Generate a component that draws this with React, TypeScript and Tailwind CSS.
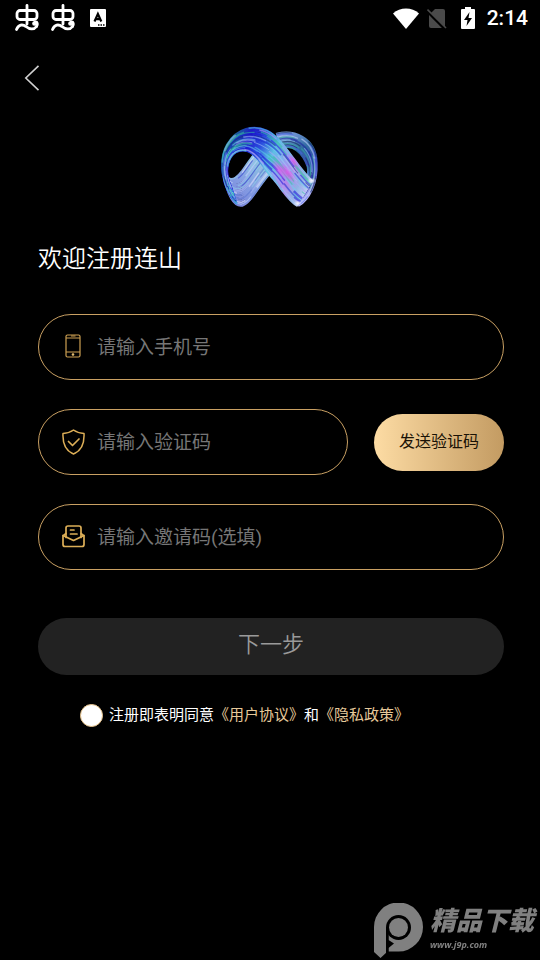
import React from "react";

type Pt = [number, number];

interface RibbonProps {
  outer: Pt[];
  inner: Pt[];
  count: number;
  base: string;
  palette: string[];
  seed: number;
}

// Small deterministic noise so the strands are the same on each render
function noise(n: number) {
  const v = Math.sin(n * 127.1) * 43758.5453;
  return v - Math.floor(v);
}

function curve(points: Pt[]) {
  const p = points.map(([x, y]) => `${x.toFixed(1)} ${y.toFixed(1)}`);
  let d = `M${p[0]}`;
  for (let i = 1; i < p.length; i += 3) {
    d += `C${p[i]} ${p[i + 1]} ${p[i + 2]}`;
  }
  return d;
}

function Ribbon({ outer, inner, count, base, palette, seed }: RibbonProps) {
  const strands = Array.from({ length: count }, (_, i) => {
    const t = i / (count - 1);
    return curve(
      outer.map(([x, y], k): Pt => [
        x + (inner[k][0] - x) * t,
        y + (inner[k][1] - y) * t,
      ])
    );
  });

  return (
    <g fill="none">
      {strands.map((d, i) => (
        <path key={`b${i}`} d={d} stroke={base} strokeWidth="6" />
      ))}
      {strands.map((d, i) => {
        const n = seed + i;
        return (
          <path
            key={`s${i}`}
            d={d}
            stroke={palette[Math.floor(noise(n) * palette.length)]}
            strokeWidth={3 + noise(n + 40) * 2}
            strokeOpacity={0.55}
            strokeDasharray={`${50 + noise(n + 7) * 70} ${30 + noise(n + 13) * 60}`}
            strokeDashoffset={noise(n + 21) * 120}
          />
        );
      })}
    </g>
  );
}

function BrandLogo() {
  return (
    <svg
      viewBox="0 0 330 285"
      className="w-[110px] h-[95px]"
      role="img"
      aria-label="连山"
    >
      <defs>
        <linearGradient id="front" gradientUnits="userSpaceOnUse" x1="20" y1="90" x2="285" y2="235">
          <stop offset="0" stopColor="#1c7a8a" />
          <stop offset="0.17" stopColor="#1c18c8" />
          <stop offset="0.32" stopColor="#2b4fe0" />
          <stop offset="0.46" stopColor="#5fc0e6" />
          <stop offset="0.62" stopColor="#9a9cf0" />
          <stop offset="0.72" stopColor="#b884ea" />
          <stop offset="0.84" stopColor="#8fb4e6" />
          <stop offset="1" stopColor="#dcdcff" />
        </linearGradient>
        <linearGradient id="left" gradientUnits="userSpaceOnUse" x1="45" y1="245" x2="150" y2="120">
          <stop offset="0" stopColor="#7a84dc" />
          <stop offset="0.5" stopColor="#86a2e4" />
          <stop offset="1" stopColor="#8fcbe0" />
        </linearGradient>
        <linearGradient id="right" gradientUnits="userSpaceOnUse" x1="200" y1="40" x2="280" y2="240">
          <stop offset="0" stopColor="#7f9fe0" />
          <stop offset="0.3" stopColor="#2f6aa0" />
          <stop offset="0.55" stopColor="#3c4cb8" />
          <stop offset="1" stopColor="#b8b9f8" />
        </linearGradient>
        <radialGradient id="glow">
          <stop offset="0" stopColor="#f24bf0" stopOpacity="0.8" />
          <stop offset="1" stopColor="#f24bf0" stopOpacity="0" />
        </radialGradient>
        <radialGradient id="shine">
          <stop offset="0" stopColor="white" stopOpacity="0.85" />
          <stop offset="1" stopColor="white" stopOpacity="0" />
        </radialGradient>
      </defs>
      <Ribbon
        outer={[[183, 42], [235, 28], [302, 50], [305, 128], [308, 190], [282, 240], [250, 258]]}
        inner={[[200, 86], [230, 70], [262, 96], [278, 140], [284, 170], [268, 205], [245, 235]]}
        count={14}
        base="url(#right)"
        palette={["#8fc7f0", "#1a1f9c", "#35b59a", "#c6d6ff", "#0d2554", "#4a63e8"]}
        seed={3}
      />
      <Ribbon
        outer={[[30, 168], [34, 225], [58, 262], [82, 257], [108, 250], [132, 195], [166, 160]]}
        inner={[[38, 172], [52, 186], [70, 168], [82, 152], [96, 132], [106, 116], [122, 98]]}
        count={20}
        base="url(#left)"
        palette={["#c9dcff", "#2a35c8", "#8fd0e8", "#e6e4ff", "#5a74d2", "#a9b4f2"]}
        seed={71}
      />
      <Ribbon
        outer={[[66, 252], [18, 205], [10, 120], [36, 74], [66, 22], [118, 14], [156, 32], [205, 55], [240, 135], [293, 184]]}
        inner={[[48, 200], [24, 150], [40, 98], [76, 92], [122, 84], [145, 148], [176, 178], [200, 206], [220, 244], [248, 258]]}
        count={26}
        base="url(#front)"
        palette={["#1d14d8", "#6fd0ee", "#34c0a0", "#a8c8f8", "#1b2bd0", "#5ad4e0", "#b0a4f4", "#0e2d78"]}
        seed={19}
      />
      <ellipse cx="194" cy="150" rx="14" ry="36" transform="rotate(-35 194 150)" fill="url(#glow)" />
      <ellipse cx="216" cy="158" rx="14" ry="34" transform="rotate(-35 216 158)" fill="url(#glow)" />
      <ellipse cx="236" cy="124" rx="10" ry="24" transform="rotate(-35 236 124)" fill="url(#glow)" />
      <ellipse cx="290" cy="182" rx="14" ry="9" fill="url(#shine)" />
      <ellipse cx="248" cy="250" rx="12" ry="9" fill="url(#shine)" />
    </svg>
  );
}

function BugIcon() {
  return (
    <svg
      viewBox="0 0 26 28"
      className="w-[26px] h-7"
      fill="none"
      stroke="white"
      strokeWidth="2.8"
      strokeLinecap="round"
      aria-hidden="true"
    >
      <rect x="3" y="6.500" width="20" height="9" rx="3" />
      <path d="M13 1.500V20" />
      <path d="M2.500 25.500C4.500 20.500 8.500 20 12 22.500C15.500 25.500 20 26 22.500 22.500" />
      <path d="M22.500 22.500C24 20.500 23.500 17.500 21 18" />
      <circle cx="20.500" cy="19.500" r="1.600" fill="white" strokeWidth="1.500" />
    </svg>
  );
}

function StatusBar() {
  return (
    <div className="flex h-9 items-center justify-between pl-3.5 pr-3">
      <div className="flex items-center gap-2.5">
        <BugIcon />
        <BugIcon />
        <svg viewBox="0 0 16 18" className="ml-1 w-4 h-[18px]" aria-hidden="true">
          <rect width="16" height="18" rx="1" fill="white" />
          <path d="M4.500 12.500L7.900 5L11.300 12.500M6 10.200H9.800" fill="none" stroke="black" strokeWidth="2.200" />
          <path d="M8 16H14.500" stroke="black" strokeWidth="1.300" strokeDasharray="1.500 1" />
        </svg>
      </div>
      <div className="flex items-center">
        <svg viewBox="0 0 26 21" className="w-[26px] h-[21px]" aria-hidden="true">
          <path d="M0 5.500C7-1.200 19-1.200 26 5.500L13 21Z" fill="white" />
        </svg>
        <svg viewBox="0 0 20 21" className="ml-2 w-5 h-[21px]" aria-hidden="true">
          <path d="M8 1H16Q18 1 18 3V18Q18 20 16 20H4Q2 20 2 18V7Z" fill="#4a4a4a" />
          <path d="M0 3L18 21" stroke="black" strokeWidth="3" />
          <path d="M0.500 1.500L19 20" stroke="#4a4a4a" strokeWidth="1.600" />
        </svg>
        <svg viewBox="0 0 14 22" className="ml-3.5 w-3.5 h-[22px]" aria-hidden="true">
          <path d="M4 0H10V2H13Q14 2 14 3V21Q14 22 13 22H1Q0 22 0 21V3Q0 2 1 2H4Z" fill="white" />
          <path d="M8.500 5L3 13H6.500L5.500 19L11 11H7.500Z" fill="black" />
        </svg>
        <span className="ml-3 font-['Roboto',sans-serif] text-[21px] leading-6 font-medium">
          2:14
        </span>
      </div>
    </div>
  );
}

function PhoneIcon() {
  return (
    <svg viewBox="0 0 23 26" className="w-[23px] h-[26px]" fill="none" stroke="#cda052" strokeWidth="1.200" aria-hidden="true">
      <rect x="4" y="1" width="14" height="22" rx="1.500" />
      <path d="M4 4H18M4 18H18M9 2H13.500" />
      <circle cx="11" cy="20.500" r="1" fill="#f0c878" stroke="#f0c878" strokeWidth="0.600" />
    </svg>
  );
}

function ShieldIcon() {
  return (
    <svg viewBox="0 0 23 26" className="w-[23px] h-[26px]" fill="none" stroke="#dcae57" strokeWidth="1.500" strokeLinejoin="round" strokeLinecap="round" aria-hidden="true">
      <path d="M11.500 1C8.500 3.200 5 4.200 1 4.400C0.500 14 3 21.500 11.500 25C20 21.500 22.500 14 22 4.400C18 4.200 14.500 3.200 11.500 1Z" />
      <path d="M6.500 12.500L10.500 16.500L17 10" strokeWidth="1.700" />
    </svg>
  );
}

function MailIcon() {
  return (
    <svg viewBox="0 0 23 26" className="w-[23px] h-[26px]" fill="none" stroke="#dcae57" strokeWidth="1.700" strokeLinejoin="round" strokeLinecap="round" aria-hidden="true">
      <path d="M4 13.500V4Q4 2 6 2H17Q19 2 19 4V13.500" />
      <path d="M4 9.500L1 12V20.500Q1 22.500 3 22.500H20Q22 22.500 22 20.500V12L19 9.500" />
      <path d="M1 11.500L11.500 16.500L22 11.500M8.500 6H12M8.500 10H15" />
    </svg>
  );
}

interface FieldProps {
  id: string;
  label: string;
  type?: string;
  icon: React.ReactNode;
}

function Field({ id, label, type = "text", icon }: FieldProps) {
  return (
    <div className="flex h-[66px] min-w-0 flex-1 items-center gap-3 rounded-full border border-[#c9a063] pl-[23px] pr-6">
      <label htmlFor={id} aria-label={label} className="shrink-0">
        {icon}
      </label>
      <input
        id={id}
        type={type}
        placeholder={label}
        className="h-full w-full min-w-0 bg-transparent text-[19px] leading-9 text-white outline-none placeholder:text-[#767676]"
      />
    </div>
  );
}

function Watermark() {
  return (
    <div className="fixed right-1.5 bottom-0 flex items-start gap-1.5 text-[#808080]">
      <svg viewBox="0 0 50 57" className="w-[50px] h-[57px]" aria-hidden="true">
        <path
          fillRule="evenodd"
          fill="currentColor"
          d="M0 24A24.500 24.500 0 1 1 24.500 48.500H14.500V45L20 40.500L14.500 37V24H13V49L6.500 55L0 49Z"
        />
        <circle cx="24.500" cy="24.500" r="12.500" fill="black" />
        <path d="M12 24H14.500V49L12 51Z" fill="black" />
        <circle cx="24.500" cy="24.500" r="9.500" fill="currentColor" />
      </svg>
      <div className="flex flex-col italic">
        <span className="text-[26px] leading-9 font-black">精品下载</span>
        <span className="font-['Open_Sans',sans-serif] text-[9px] leading-3 font-bold">
          www.j9p.com
        </span>
      </div>
    </div>
  );
}

export default function App() {
  return (
    <main className="min-h-screen bg-black font-['Roboto','Noto_Sans_CJK_SC',sans-serif] text-white">
      <StatusBar />

      <header className="flex h-[84px] items-center pl-6">
        <button type="button" aria-label="返回" className="cursor-pointer">
          <svg viewBox="0 0 16 26" className="w-4 h-[26px]" fill="none" stroke="#d0d0d0" strokeWidth="1.600" aria-hidden="true">
            <path d="M14.500 0.800L1.800 13L14.500 25.200" />
          </svg>
        </button>
      </header>

      <div className="flex justify-center">
        <BrandLogo />
      </div>

      <form className="pl-[38px] pr-9" onSubmit={(e) => e.preventDefault()}>
        <h1 className="mt-6 text-2xl leading-10 font-[350]">欢迎注册连山</h1>

        <div className="mt-[35px] flex flex-col gap-[29px]">
          <div className="flex">
            <Field id="phone" label="请输入手机号" type="tel" icon={<PhoneIcon />} />
          </div>
          <div className="flex items-center gap-[26px]">
            <Field id="code" label="请输入验证码" icon={<ShieldIcon />} />
            <button
              type="button"
              className="h-[57px] w-[130px] shrink-0 cursor-pointer rounded-full bg-linear-to-r from-[#fddca4] to-[#c39b62] text-base text-[#1a1206]"
            >
              发送验证码
            </button>
          </div>
          <div className="flex">
            <Field id="invite" label="请输入邀请码(选填)" icon={<MailIcon />} />
          </div>
        </div>

        <button
          type="submit"
          className="mt-12 h-[57px] w-full cursor-pointer rounded-full bg-[#222222] pb-1 text-[22px] font-[350] text-[#9a9a9a]"
        >
          下一步
        </button>

        <div className="mt-7 flex items-center gap-1.5 pl-[42px] text-[15px] leading-6">
          <input
            id="agree"
            type="checkbox"
            className="h-[23px] w-[23px] shrink-0 appearance-none rounded-full border border-[#e8c48c] bg-white checked:bg-[#e8c48c]"
          />
          <p>
            <label htmlFor="agree">注册即表明同意</label>
            <a href="#terms" className="text-[#e6c99a]">《用户协议》</a>
            和
            <a href="#privacy" className="text-[#e6c99a]">《隐私政策》</a>
          </p>
        </div>
      </form>

      <Watermark />
    </main>
  );
}
